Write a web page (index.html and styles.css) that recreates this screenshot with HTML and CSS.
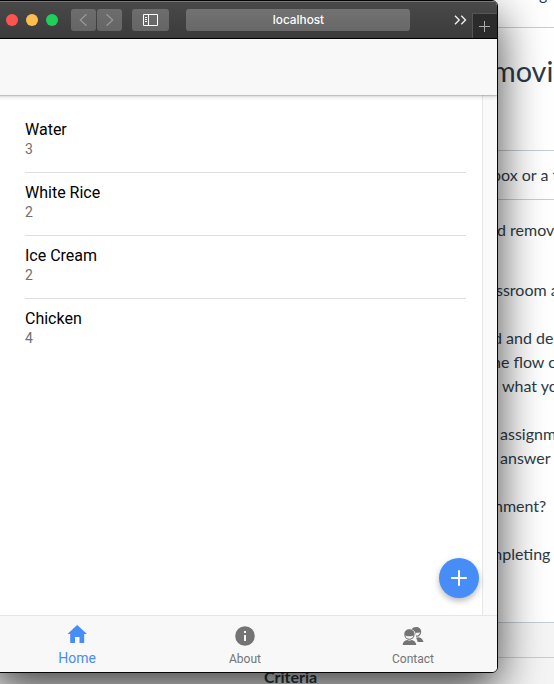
FILE: index.html
```
<!DOCTYPE html>
<html lang="en">
<head>
<meta charset="utf-8">
<title>localhost</title>
<link rel="stylesheet" href="styles.css">
</head>
<body>
<main class="page">
  <p class="doc-top">g</p>
  <h1 class="doc-title">moving</h1>
  <p class="doc-row">box or a text</p>
  <div class="doc-body">
    <p class="line remove">d removing</p>
    <p class="line classroom">ssroom and</p>
    <p class="line deleting">d and deleting</p>
    <p class="line flow">he flow of</p>
    <p class="line what">what you</p>
    <p class="line assign">assignment</p>
    <p class="line answer">answer the</p>
    <p class="line ment">nment?</p>
    <p class="line completing">mpleting</p>
  </div>
  <div class="rubric-title"></div>
  <div class="rubric-head">Criteria</div>
</main>
<section class="window">
  <header class="toolbar">
    <div class="lights"><i class="red"></i><i class="yellow"></i><i class="green"></i></div>
    <div class="history">
      <span class="btn"><svg width="25" height="22" viewBox="0 0 25 22"><path d="M15.5 5.2L9.3 11l6.2 5.8"/></svg></span>
      <span class="btn"><svg width="25" height="22" viewBox="0 0 25 22"><path d="M9.5 5.2l6.2 5.8-6.2 5.8"/></svg></span>
    </div>
    <span class="btn sidebar"><svg width="15" height="12" viewBox="0 0 15 12"><path d="M.5.5h14v11H.5zM5.5.5v11M2 3.5h2M2 5.5h2M2 7.5h2"/></svg></span>
    <div class="address">localhost</div>
    <svg class="more" width="13" height="10" viewBox="0 0 13 10"><path d="M1 .8L5.2 5 1 9.2M7.3.8L11.500 5 7.3 9.2"/></svg>
    <span class="new-tab"><svg width="11" height="11" viewBox="0 0 11 11"><path d="M5.5 0v11M0 5.500h11"/></svg></span>
  </header>
  <div class="app-header"></div>
  <div class="content">
    <ul class="list">
      <li><h2>Water</h2><p>3</p></li>
      <li><h2>White Rice</h2><p>2</p></li>
      <li><h2>Ice Cream</h2><p>2</p></li>
      <li><h2>Chicken</h2><p>4</p></li>
    </ul>
    <div class="scrollbar"></div>
    <button class="fab" aria-label="Add"><svg width="16" height="16" viewBox="0 0 16 16"><path d="M8 .2v15.600M.2 8h15.600"/></svg></button>
  </div>
  <nav class="tabs">
    <a class="tab active"><svg width="24" height="24" viewBox="0 0 24 24"><path d="M10 21v-6h4.500v6h4.700v-9H22L12.200 3 2.500 12h2.700v9z"/></svg><span>Home</span></a>
    <a class="tab"><svg width="24" height="24" viewBox="0 0 24 24"><path fill-rule="evenodd" d="M12 2.200a9.800 9.800 0 1 0 0 19.600 9.800 9.800 0 0 0 0-19.600zM11 7h2v2h-2zm0 4h2v6h-2z"/></svg><span>About</span></a>
    <a class="tab"><svg width="24" height="24" viewBox="0 0 24 24"><g><path d="M10.700 5.200C11.500 3.800 13 2.900 15 2.900c3 0 5.200 2 5.200 4.700 0 3-1.900 5.300-4.900 5.300-.5-4.500-2-6.800-4.600-7.700z"/><path d="M15 13.800l2.500-.6c2.500.6 4.500 2 5 4.800h-5.800c-.5-1.700-.9-3-1.700-4.200z"/><path d="M3.300 10.300C3.300 7.300 5.400 5.300 8.300 5.300s5.300 2 5.300 5c0 3-2.300 5.500-5.300 5.500s-5-2.500-5-5.500z"/><path d="M1.600 21c.3-3 2.100-4.500 4.700-5 1.300.8 2.900.8 4.200 0 2.600.5 4.400 2 4.800 5z"/></g><path class="cut" d="M4.300 11.400c2.600 1.200 5.600 1.200 8.200 0-.5 2-2.100 3.300-4.200 3.300s-3.600-1.300-4-3.300zM14.600 8.700c1.700.3 3.200.1 4.600-.5-.5 2-1.900 3.300-3.800 3.500z"/></svg><span>Contact</span></a>
  </nav>
</section>
</body>
</html>
```
FILE: styles.css
```
* { box-sizing: border-box; }
body, h1, h2, p, ul { margin: 0; padding: 0; }
body {
  width: 554px;
  height: 684px;
  overflow: hidden;
  position: relative;
  background: #fff;
}
svg { display: block; }

/* Document behind the browser window */
.page {
  height: 684px;
  overflow: hidden;
  color: #2d3b45;
  font: 16px/24px Lato, sans-serif;
  white-space: nowrap;
}
.doc-top { height: 46px; margin-top: -18px; padding-left: 539px; border-bottom: 1px solid #c7cdd1; }
.doc-title { height: 122px; padding: 25px 0 0 492px; font-size: 28.8px; line-height: 36px; font-weight: 400; }
.doc-row { height: 50px; padding: 12px 0 0 492px; border: solid #c7cdd1; border-width: 1px 0; }
.doc-body { height: 422px; padding-top: 18px; }
.line { height: 24px; }
.remove { padding-left: 497px; }
.classroom { margin-top: 36px; padding-left: 496px; }
.deleting { margin-top: 24px; padding-left: 493px; }
.flow { padding-left: 492px; }
.what { padding-left: 502px; }
.assign { margin-top: 24px; padding-left: 500px; }
.answer { padding-left: 500px; }
.ment { margin-top: 24px; padding-left: 494px; }
.completing { margin-top: 24px; padding-left: 489px; }
.rubric-title { height: 35px; background: #f5f5f5; border-top: 1px solid #c7cdd1; }
.rubric-head { height: 40px; padding: 7px 0 0 264px; background: #f5f5f5; border-top: 1px solid #c7cdd1; font-weight: 700; }

/* Browser window */
.window {
  position: absolute;
  left: -8px;
  top: 0;
  width: 506px;
  height: 673px;
  display: flex;
  flex-direction: column;
  overflow: hidden;
  background: #fff;
  border: 1px solid #050505;
  border-radius: 6px;
  box-shadow: 0 16px 46px rgba(0, 0, 0, .74);
  font-family: Roboto, sans-serif;
}
.toolbar {
  flex: none;
  height: 38px;
  padding-left: 13px;
  display: flex;
  align-items: center;
  background: linear-gradient(#494949, #3b3b3b);
  border-top: 1px solid #777;
  border-bottom: 1px solid #000;
}
.lights { display: flex; gap: 8px; width: 65px; }
.lights i { width: 12px; height: 12px; border-radius: 50%; }
.red { background: #ff5350; }
.yellow { background: #ffbd4f; }
.green { background: #20ce5b; }
.history { display: flex; gap: 1px; }
.btn {
  width: 25px;
  height: 22px;
  display: flex;
  align-items: center;
  justify-content: center;
  border-radius: 3px;
  background: linear-gradient(#6d6d6d, #656565);
}
.btn svg { fill: none; stroke: #999; stroke-width: 1.2; }
.sidebar { width: 37px; margin-left: 10px; }
.sidebar svg { stroke: #fff; stroke-width: 1; }
.address {
  width: 224px;
  height: 22px;
  margin-left: 17px;
  padding-left: 1px;
  border-radius: 3px;
  background: linear-gradient(#727272, #686868);
  color: #fff;
  font: 500 11.8px/23px Inter, sans-serif;
  text-align: center;
}
.more { margin-left: 44px; fill: none; stroke: #eee; stroke-width: 1.4; }
.new-tab {
  align-self: flex-end;
  width: 25px;
  height: 25px;
  margin-left: auto;
  padding-right: 2px;
  display: flex;
  align-items: center;
  justify-content: center;
  background: #2b2b2b;
  border: solid #555;
  border-width: 1px 0 0 1px;
}
.new-tab svg { stroke: #aaa; stroke-width: 1; }
.app-header {
  flex: none;
  height: 56px;
  background: #f8f8f8;
  box-shadow: 0 1px 1px rgba(0, 0, 0, .14), 0 2px 4px rgba(0, 0, 0, .15);
  z-index: 1;
}
.content { flex: 1; display: flex; position: relative; }
.list { flex: 1; padding: 15px 16px 0 32px; list-style: none; }
.list li { height: 63px; padding-top: 10px; border-bottom: 1px solid #dedede; }
.list li:last-child { border-bottom: 0; }
.list h2 { font-size: 16px; line-height: 20px; font-weight: 400; color: #000; }
.list p { font-size: 14px; line-height: 19px; color: #707070; }
.scrollbar { width: 15px; background: #fafafa; border-left: 1px solid #e7e7e7; }
.fab {
  position: absolute;
  right: 18px;
  bottom: 17px;
  width: 40px;
  height: 40px;
  padding: 0;
  display: flex;
  align-items: center;
  justify-content: center;
  border: 0;
  border-radius: 50%;
  background: #468df7;
  box-shadow: 0 3px 6px rgba(0, 0, 0, .28);
}
.fab svg { stroke: #fff; stroke-width: 2; }
.tabs { flex: none; height: 57px; display: flex; background: #f8f8f8; border-top: 1px solid #e6e6e6; }
.tab {
  flex: 1;
  padding-top: 8px;
  display: flex;
  flex-direction: column;
  align-items: center;
  color: #747474;
  font-size: 12px;
  line-height: 22px;
}
.tab svg { fill: currentColor; }
.tab .cut { fill: #f8f8f8; }
.active { padding-top: 6px; color: #468df7; font-size: 14px; line-height: 24px; }
```
